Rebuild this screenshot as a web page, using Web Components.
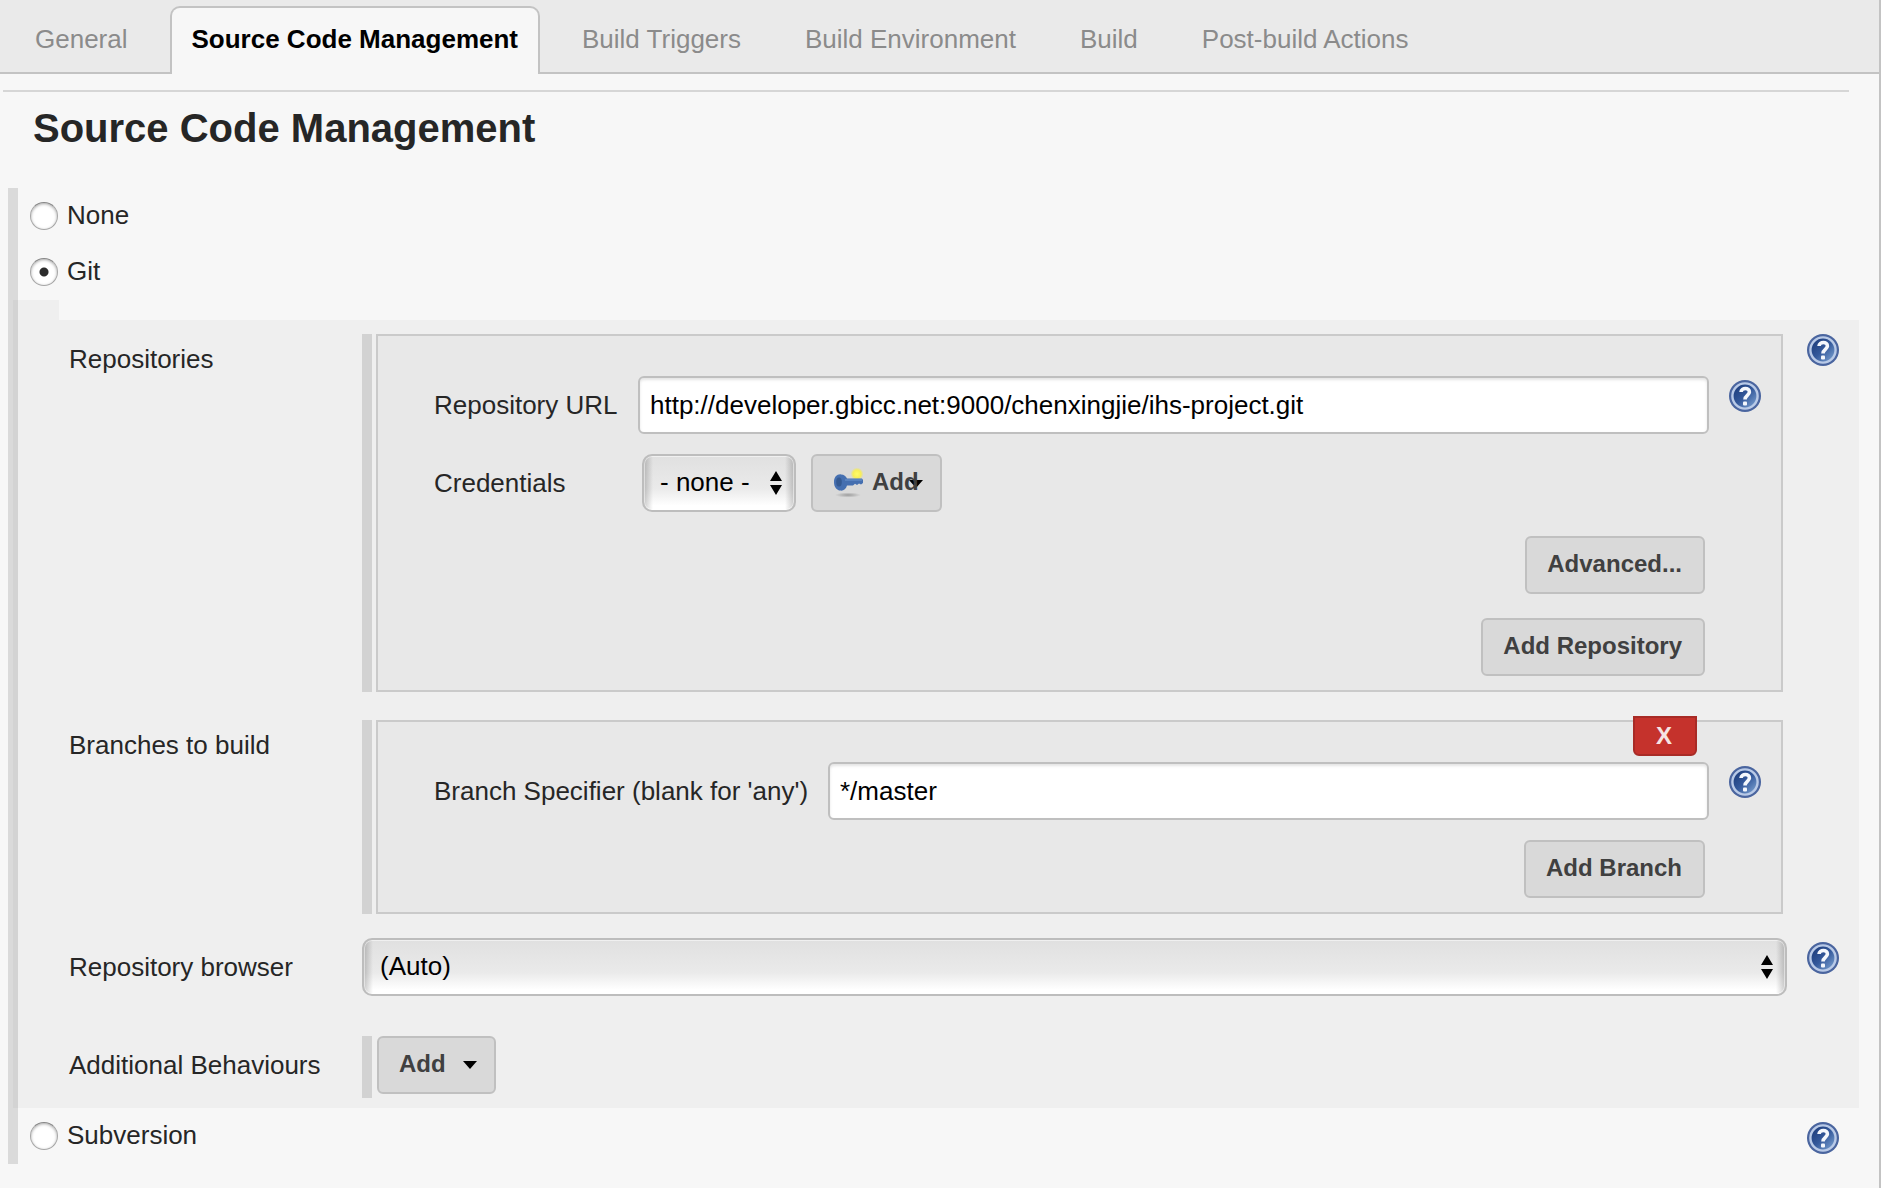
<!DOCTYPE html>
<html lang="en">
<head>
<meta charset="utf-8">
<title>Source Code Management</title>
<style>
  html, body { margin: 0; min-height: 100vh; background: #fff; }
  body { font: 26px/32px "Liberation Sans", Arial, sans-serif; color: #262626; display: flex; }
</style>
</head>
<body>
<config-page>
  <tab-bar slot="tabs">
    <tab-item>General</tab-item>
    <tab-item active>Source Code Management</tab-item>
    <tab-item>Build Triggers</tab-item>
    <tab-item>Build Environment</tab-item>
    <tab-item>Build</tab-item>
    <tab-item>Post-build Actions</tab-item>
  </tab-bar>
  <config-section heading="Source Code Management">
    <radio-row label="None"></radio-row>
    <radio-row label="Git" checked></radio-row>
    <nested-options>
      <option-row label="Repositories" help>
        <repeat-box style="--label-width: 184px">
          <text-field label="Repository URL" value="http://developer.gbicc.net:9000/chenxingjie/ihs-project.git"></text-field>
          <select-field label="Credentials" value="- none -"><grey-button icon="key" caret="over">Add</grey-button></select-field>
          <button-line><grey-button>Advanced...</grey-button></button-line>
          <button-line><grey-button>Add Repository</grey-button></button-line>
        </repeat-box>
      </option-row>
      <option-row label="Branches to build">
        <repeat-box removable style="--label-width: 374px">
          <text-field label="Branch Specifier (blank for 'any')" value="*/master"></text-field>
          <button-line><grey-button>Add Branch</grey-button></button-line>
        </repeat-box>
      </option-row>
      <select-row label="Repository browser" value="(Auto)"></select-row>
      <option-row label="Additional Behaviours" line>
        <repeat-box plain><grey-button caret="after">Add</grey-button></repeat-box>
      </option-row>
    </nested-options>
    <radio-row label="Subversion" help></radio-row>
  </config-section>
</config-page>

<script>
const base = `*{box-sizing:border-box} :host{display:block}`;
const esc = s => (s || '').replace(/&/g, '&amp;').replace(/"/g, '&quot;').replace(/</g, '&lt;');

function define(name, css, html) {
  customElements.define(name, class extends HTMLElement {
    constructor() { super(); this.attachShadow({ mode: 'open' }); }
    connectedCallback() {
      const get = n => esc(this.getAttribute(n));
      const has = n => this.hasAttribute(n);
      this.shadowRoot.innerHTML = `<style>${base}${css}</style>${html(get, has)}`;
    }
  });
}

define('config-page', `
  :host{flex:1;margin-right:7px;border-right:2px solid #c3c3c3;background:#f7f7f7}`,
  () => `<slot name="tabs"></slot><main><slot></slot></main>`);

define('tab-bar', `
  nav{display:flex;gap:20px;padding:6px 13px 0;background:#eaeaea;border-bottom:2px solid #c3c3c3}`,
  () => `<nav><slot></slot></nav>`);

define('tab-item', `
  a{display:block;height:68px;margin-bottom:-2px;padding:15px 20px 0;border:2px solid transparent;border-bottom:0;
    border-radius:10px 10px 0 0;color:#8b8b8b;text-decoration:none;white-space:nowrap}
  :host([active]) a{background:#f7f7f7;border-color:#c3c3c3;color:#000;font-weight:bold}`,
  () => `<a href="#"><slot></slot></a>`);

define('config-section', `
  hr{height:2px;margin:16px 30px 0 3px;border:0;background:#d6d6d6}
  h1{margin:12px 33px 36px;font-size:40px;line-height:48px}
  .group{margin:0 20px 24px 8px;background:linear-gradient(#dadada,#dadada) 0 0/10px 100% no-repeat}`,
  get => `<hr><h1>${get('heading')}</h1><div class="group"><slot></slot></div>`);

define('help-link', `
  :host{width:32px;height:32px} a,svg{display:block}`,
  () => `<a href="#" aria-label="Help"><svg width="32" height="32" viewBox="0 0 32 32">
    <defs><linearGradient id="g" x1="0" y1="0" x2="1" y2="1"><stop offset=".15" stop-color="#20407f"/><stop offset=".5" stop-color="#34599b"/><stop offset="1" stop-color="#88aeda"/></linearGradient></defs>
    <circle cx="16" cy="16" r="16" fill="#4a659f"/><circle cx="16" cy="16" r="12.6" fill="url(#g)" stroke="#b9cae7" stroke-width="2.4"/>
    <path d="M12 12C12.300 7.400 20.600 7.200 20.400 12.200C20.200 15.400 16 15.400 16 19.400" fill="none" stroke="#f4f7fc" stroke-width="3.600"/>
    <rect x="14" y="21.400" width="4" height="4" rx="1" fill="#f4f7fc"/></svg></a>`);

define('radio-row', `
  :host{display:flex;align-items:center;justify-content:space-between;height:56px;padding:0 20px 0 22px}
  label{display:flex;align-items:center;gap:9px}
  label span{padding-bottom:2px}
  input{appearance:none;width:28px;height:28px;margin:0;border:1px solid #a6a6a6;border-top-color:#868686;border-radius:50%;background:#fff;
    box-shadow:inset 0 1px 3px #aaa}
  input:checked{background:radial-gradient(circle,#2b2b2b 4px,#fff 5px)}
  help-link{margin-top:4px}`,
  (get, has) => `<label><input type="radio"${has('checked') ? ' checked' : ''}><span>${get('label')}</span></label>${has('help') ? '<help-link></help-link>' : ''}`);

define('nested-options', `
  :host{margin-left:5px}
  .lead{width:46px;height:20px;background:rgba(0,0,0,.03)}
  .rows{padding:14px 20px 10px 56px;background:rgba(0,0,0,.03)}`,
  () => `<div class="lead"></div><div class="rows"><slot></slot></div>`);

const rowCss = `
  :host{display:grid;grid-template-columns:293px minmax(0,1fr) 32px}
  .name{padding-top:9px}
  :host([line]) .name,label.name{padding-top:13px}`;

define('option-row', rowCss + `
  :host(:not(:first-child)){margin-top:28px}
  :host([line]){margin-top:40px}
  .body{margin-right:24px}`,
  (get, has) => `<span class="name">${get('label')}</span><div class="body"><slot></slot></div>${has('help') ? '<help-link></help-link>' : ''}`);

const selectCss = `
  .pick{position:relative;display:block}
  select{appearance:none;display:block;width:100%;height:58px;margin:0;padding:0 44px 2px 16px;font:inherit;color:#000;
    border:2px solid #bdbdbd;border-radius:10px;
    background:linear-gradient(90deg,rgba(0,0,0,.2),transparent 9px calc(100% - 9px),rgba(0,0,0,.2)),linear-gradient(#e0e0e0,#eaeaea 60%,#fff 92%);
    box-shadow:inset 0 0 0 1px rgba(255,255,255,.5)}
  .pick svg{position:absolute;right:14px;top:17px;pointer-events:none}`;
const selectHtml = v => `<span class="pick"><select id="f"><option>${v}</option></select>
  <svg width="12" height="24" viewBox="0 0 12 24"><path d="M6 0l6 10H0zM6 24l6-10H0z"/></svg></span>`;

define('select-row', rowCss + selectCss + `
  :host{margin-top:24px}
  .pick{margin-right:20px}
  help-link{margin-top:4px}`,
  get => `<label class="name" for="f">${get('label')}</label>${selectHtml(get('value'))}<help-link></help-link>`);

define('repeat-box', `
  :host{display:grid;grid-template-columns:10px minmax(0,1fr);gap:4px}
  .bar{background:#d2d2d2}
  .box{position:relative;padding:40px 20px 14px 56px;border:2px solid #cacaca;background:#e8e8e8}
  :host([plain]){gap:5px}
  :host([plain]) .box{padding:0 0 4px;border:0;background:none}
  button{position:absolute;top:-6px;right:84px;width:64px;height:40px;padding:0 2px 0 0;border:2px solid #a82b26;border-radius:0 0 6px 6px;
    background:#c5322c;color:#f6e4e3;font:bold 24px/28px "Liberation Sans",Arial,sans-serif}`,
  (get, has) => `<div class="bar"></div><div class="box">${has('removable') ? '<button type="button">X</button>' : ''}<slot></slot></div>`);

const fieldCss = `
  :host{display:grid;grid-template-columns:var(--label-width) minmax(0,1fr) 32px;gap:20px}
  label{padding-top:13px;white-space:nowrap}`;

define('text-field', fieldCss + `
  input{width:100%;height:58px;margin:0;padding:0 10px;border:2px solid #bfbfbf;border-radius:6px;background:#fff;
    box-shadow:inset 0 2px 3px #e4e4e4;font:inherit;color:#000}
  help-link{margin-top:4px}`,
  get => `<label for="f">${get('label')}</label><input id="f" type="text" value="${get('value')}"><help-link></help-link>`);

define('select-field', fieldCss + selectCss + `
  :host{margin-top:20px}
  .line{display:flex;gap:15px;margin-left:4px}`,
  get => `<label for="f">${get('label')}</label><div class="line">${selectHtml(get('value'))}<slot></slot></div>`);

define('button-line', `
  :host{display:flex;justify-content:flex-end;margin:20px 56px 0 0}
  :host(:nth-child(n+3)){margin-top:24px}`,
  () => `<slot></slot>`);

define('grey-button', `
  button{position:relative;display:flex;align-items:center;gap:7px;height:58px;margin:0;padding:0 21px 0 20px;border:2px solid #c0c0c0;border-radius:6px;
    background:#d9d9d9;color:#404040;font:bold 24px/28px "Liberation Sans",Arial,sans-serif;white-space:nowrap}
  span{padding-bottom:2px}
  .after{margin:0 -4px 0 10px}
  .over{position:absolute;right:17px;top:24px;z-index:-1}
  button{isolation:isolate}`,
  (get, has) => `<button type="button">${has('icon') ? `<svg width="32" height="32" viewBox="0 0 32 32">
    <defs><radialGradient id="s"><stop offset="0" stop-color="#fffb6a"/><stop offset=".6" stop-color="#f8ee58"/><stop offset="1" stop-color="#f0e860" stop-opacity="0"/></radialGradient>
    <radialGradient id="h"><stop offset="0" stop-opacity=".28"/><stop offset="1" stop-opacity="0"/></radialGradient></defs>
    <ellipse cx="15" cy="28" rx="13" ry="2.6" fill="url(#h)"/>
    <circle cx="24" cy="7" r="6.5" fill="url(#s)"/>
    <path d="M1 15C1 10 4 7 8 7.400C11 7.600 13 9 14 11.500L29 11.500L30 13L30 16L28 17.500L26 16.500L24 18L22 16.800L20 18.500L14 18.500C13 22 10.500 24 7.500 23.600C3.500 23.400 1 20 1 15Z" fill="#456fb0"/>
    <path d="M12 13H29" stroke="#5f88c4" stroke-width="1.500"/><ellipse cx="6" cy="15" rx="2.800" ry="4.500" fill="#355a92"/></svg>` : ''}<span><slot></slot></span>${has('caret') ? `<svg class="${get('caret')}" width="14" height="8" viewBox="0 0 14 8"><path d="M0 0H14L7 8z"/></svg>` : ''}</button>`);
</script>
</body>
</html>
